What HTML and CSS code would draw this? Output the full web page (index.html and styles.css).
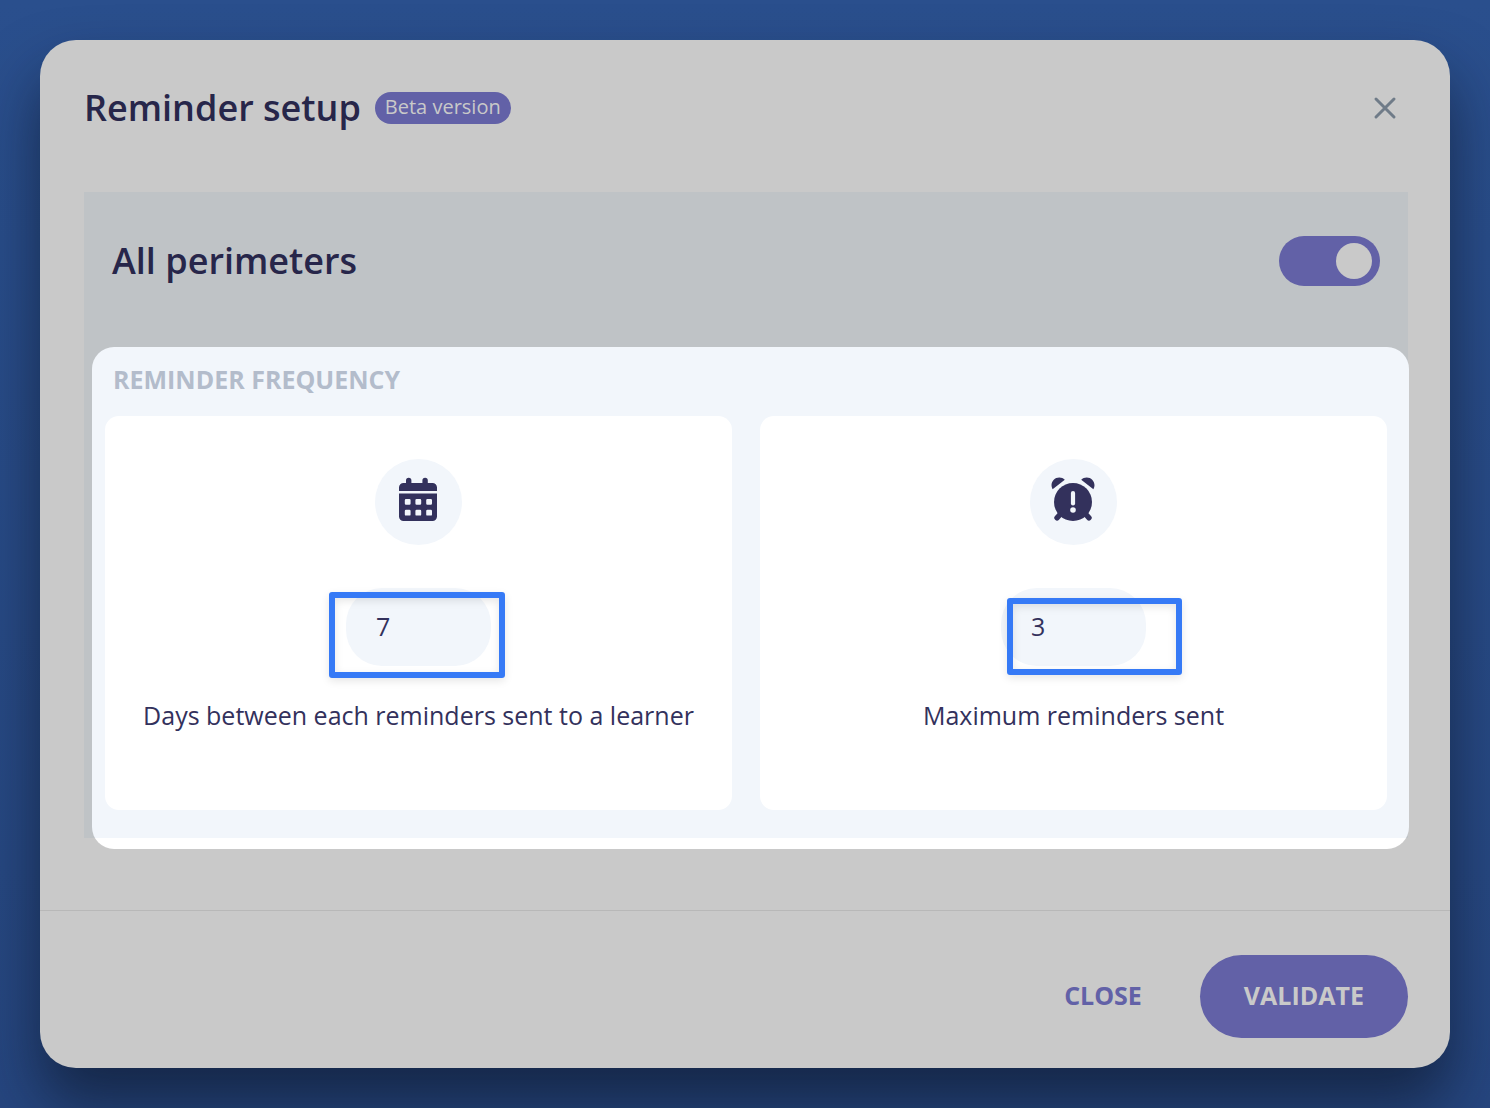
FILE: index.html
```html
<!DOCTYPE html>
<html lang="en">
<head>
<meta charset="utf-8">
<meta name="viewport" content="width=device-width, initial-scale=1">
<title>Reminder setup</title>
<link rel="stylesheet" href="styles.css">
</head>
<body>
<main class="dialog" role="dialog" aria-labelledby="dialog-title">
  <header class="dialog-header">
    <h1 class="title" id="dialog-title">Reminder setup</h1>
    <span class="badge">Beta version</span>
    <button class="icon-button" type="button" aria-label="Close dialog">
      <svg width="24" height="24" viewBox="0 0 24 24" fill="none" stroke="currentColor" stroke-width="3" stroke-linecap="round"><path d="M3 3l18 18M21 3L3 21"/></svg>
    </button>
  </header>
  <section class="panel">
    <div class="panel-header">
      <label class="title" for="all-perimeters">All perimeters</label>
      <input class="switch" id="all-perimeters" type="checkbox" role="switch" checked>
    </div>
    <div class="spotlight">
      <h2 class="section-title">REMINDER FREQUENCY</h2>
      <div class="cards">
        <div class="card">
          <span class="card-icon">
            <svg width="40" height="44" viewBox="0 0 40 44" fill="currentColor"><path fill-rule="evenodd" d="M8 6V3.500a2.700 2.700 0 0 1 5.400 0V6h11V3.500a2.700 2.700 0 0 1 5.400 0V6h4.700a4.500 4.500 0 0 1 4.500 4.500V14H1v-3.500A4.500 4.500 0 0 1 5.500 6zM1 16.400h38v23.100a4.500 4.500 0 0 1-4.500 4.500h-29A4.500 4.500 0 0 1 1 39.500zM8 22a1.200 1.200 0 0 0-1.200 1.200v3.400A1.200 1.200 0 0 0 8 27.800h3.400a1.200 1.200 0 0 0 1.200-1.200v-3.400a1.200 1.200 0 0 0-1.200-1.200zm10.600 0a1.200 1.200 0 0 0-1.200 1.200v3.400a1.200 1.200 0 0 0 1.200 1.200H22a1.200 1.200 0 0 0 1.200-1.200v-3.400A1.200 1.200 0 0 0 22 22zm10.800 0a1.200 1.200 0 0 0-1.200 1.200v3.400a1.200 1.200 0 0 0 1.200 1.200h3.400a1.200 1.200 0 0 0 1.200-1.200v-3.400a1.200 1.200 0 0 0-1.200-1.200zM8 32.800A1.200 1.200 0 0 0 6.800 34v3.400A1.200 1.200 0 0 0 8 38.600h3.400a1.200 1.200 0 0 0 1.200-1.200V34a1.200 1.200 0 0 0-1.200-1.200zm10.600 0a1.200 1.200 0 0 0-1.200 1.200v3.400a1.200 1.200 0 0 0 1.200 1.200H22a1.200 1.200 0 0 0 1.200-1.200V34a1.200 1.200 0 0 0-1.200-1.200zm10.800 0a1.200 1.200 0 0 0-1.200 1.200v3.400a1.200 1.200 0 0 0 1.200 1.200h3.400a1.200 1.200 0 0 0 1.200-1.200V34a1.200 1.200 0 0 0-1.200-1.200z"/></svg>
          </span>
          <div class="field">
            <input class="number" id="days" type="text" inputmode="numeric" value="7">
            <span class="ring ring-days"></span>
          </div>
          <label class="caption" for="days">Days between each reminders sent to a learner</label>
        </div>
        <div class="card">
          <span class="card-icon">
            <svg width="44" height="44" viewBox="0 0 44 44" fill="currentColor"><path d="M1.600 12.200A7.600 7.600 0 0 1 0.500 8.300C0.500 4 4 .500 8.300 .500c2.200 0 4 .800 5.500 2.200zM42.400 12.200a7.600 7.600 0 0 0 1.100-3.900C43.500 4 40 .500 35.700 .500c-2.200 0-4 .800-5.500 2.200z"/><path d="M9.500 37L6 40.800M34.500 37l3.500 3.800" stroke="currentColor" stroke-width="5.400" stroke-linecap="round"/><circle cx="22" cy="25" r="19"/><path class="mark" d="M22 16v10.500" fill="none" stroke-width="4.200" stroke-linecap="round"/><circle class="dot" cx="22" cy="33" r="2.800"/></svg>
          </span>
          <div class="field">
            <input class="number" id="maximum" type="text" inputmode="numeric" value="3">
            <span class="ring ring-maximum"></span>
          </div>
          <label class="caption" for="maximum">Maximum reminders sent</label>
        </div>
      </div>
    </div>
  </section>
  <footer class="dialog-footer">
    <button class="button" type="button">CLOSE</button>
    <button class="button button-primary" type="button">VALIDATE</button>
  </footer>
</main>
</body>
</html>
```

FILE: styles.css
```css
* {
  box-sizing: border-box;
}

body {
  margin: 0;
  padding: 40px;
  min-height: 100vh;
  background: #284b89 linear-gradient(#2a4f8d, #26467f);
  color: #33315c;
  font-family: "Open Sans", "Noto Sans", sans-serif;
  font-size: 25px;
  line-height: 36px;
}

button,
input {
  margin: 0;
  border: 0;
  font: inherit;
  color: inherit;
}

.dialog {
  border-radius: 36px;
  background: #c9c9c9;
  box-shadow: 0 36px 60px rgba(10, 18, 35, 0.6);
}

.dialog-header {
  display: flex;
  align-items: center;
  gap: 14px;
  padding: 44px 43px 60px 44px;
}

.title {
  margin: 0;
  color: #27264a;
  font-size: 36px;
  font-weight: 600;
  line-height: 48px;
}

.badge {
  padding: 0 10px 2px;
  border-radius: 16px;
  background: #6261a7;
  color: #c9c9c9;
  font-size: 20px;
  line-height: 30px;
}

.icon-button {
  display: flex;
  align-items: center;
  justify-content: center;
  width: 44px;
  height: 44px;
  margin-left: auto;
  padding: 0;
  background: none;
  color: #6f7b88;
}

.panel {
  display: flow-root;
  margin: 0 42px 0 44px;
  background: #bfc3c6;
}

.panel-header {
  display: flex;
  align-items: center;
  justify-content: space-between;
  padding: 44px 28px 61px;
}

.switch {
  display: flex;
  align-items: center;
  justify-content: flex-end;
  appearance: none;
  width: 101px;
  height: 50px;
  padding: 8px;
  border-radius: 25px;
  background: #6261a7;
}

.switch::before {
  width: 36px;
  height: 36px;
  border-radius: 50%;
  background: #c9c9c9;
  content: "";
}

.switch:not(:checked) {
  justify-content: flex-start;
}

.spotlight {
  margin: 0 -1px -11px 8px;
  padding: 14px 22px 39px 13px;
  border-radius: 22px;
  background: linear-gradient(to top, #fff 11px, #f2f6fb 11px);
}

.section-title {
  margin: 0 0 19px;
  padding: 0 8px;
  color: #b3bccb;
  font-size: 25px;
  font-weight: 700;
  line-height: 36px;
}

.cards {
  display: grid;
  grid-template-columns: 1fr 1fr;
  gap: 28px;
}

.card {
  display: flex;
  flex-direction: column;
  align-items: center;
  padding: 43px 16px 77px;
  border-radius: 14px;
  background: #fff;
}

.card-icon {
  display: flex;
  justify-content: center;
  width: 87px;
  height: 86px;
  padding: 18px 1px 0 0;
  border-radius: 50%;
  background: #f2f6fb;
}

.mark {
  stroke: #f2f6fb;
}

.dot {
  fill: #f2f6fb;
}

.field {
  position: relative;
  display: flex;
  margin: 43px 0 31px;
}

.number {
  width: 145px;
  height: 78px;
  padding: 0 30px 2px;
  border-radius: 36px;
  background: #f2f6fb;
}

.ring {
  position: absolute;
  border: 6px solid #367af6;
  border-radius: 3px;
  box-shadow: 0 3px 8px rgba(0, 0, 0, 0.1), inset 0 3px 8px rgba(0, 0, 0, 0.1);
  pointer-events: none;
}

.ring-days {
  top: 4px;
  left: -17px;
  width: 176px;
  height: 86px;
}

.ring-maximum {
  top: 10px;
  left: 6px;
  width: 175px;
  height: 77px;
}

.caption {
  text-align: center;
}

.dialog-footer {
  display: flex;
  justify-content: flex-end;
  gap: 44px;
  margin-top: 72px;
  padding: 44px 42px 30px;
  border-top: 1px solid #b8b8b8;
}

.button {
  height: 83px;
  padding: 0 14px 3px;
  border-radius: 42px;
  background: none;
  color: #6261a7;
  font-weight: 700;
}

.button-primary {
  padding: 0 44px 3px;
  background: #6261a7;
  color: #c9c9c9;
}
```
